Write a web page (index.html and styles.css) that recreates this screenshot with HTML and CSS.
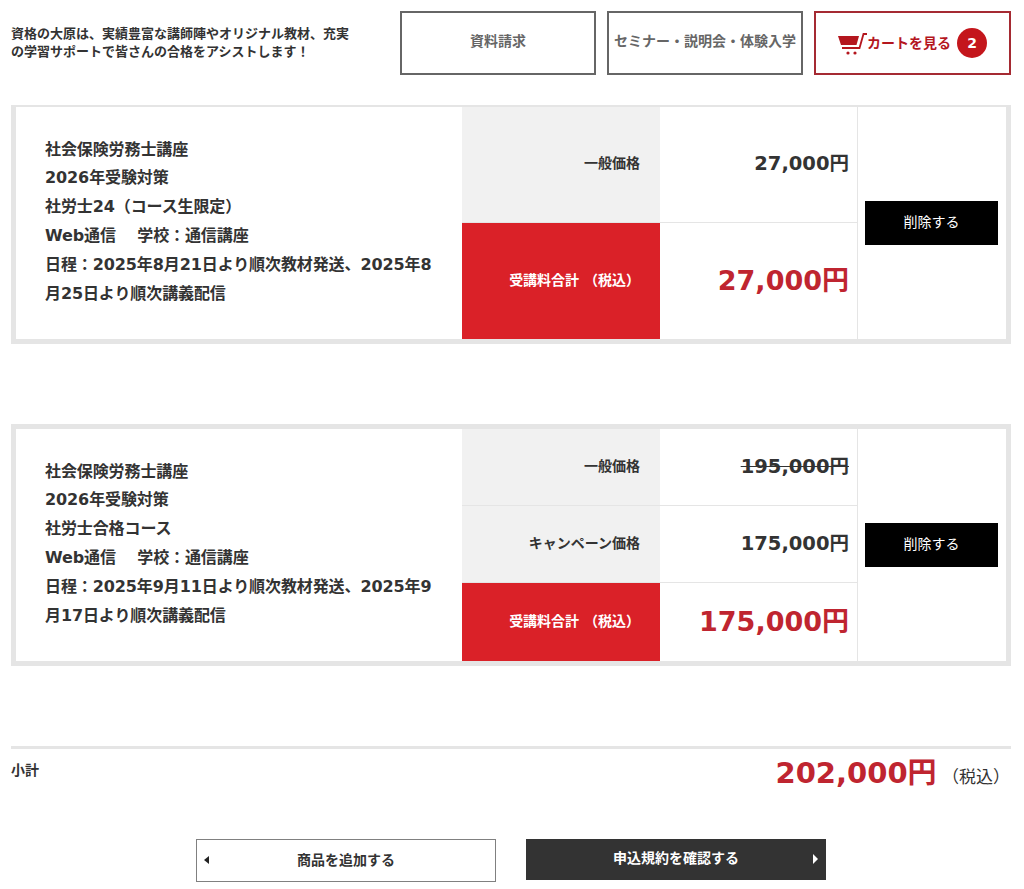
FILE: index.html
```html
<!DOCTYPE html>
<html lang="ja">
<head>
    <meta charset="UTF-8">
    <meta name="viewport" content="width=device-width, initial-scale=1.0">
    <title>カート</title>
    <link rel="stylesheet" href="styles.css">
</head>
<body>
    <header class="site-header">
        <p class="lead">資格の大原は、実績豊富な講師陣やオリジナル教材、充実<br>の学習サポートで皆さんの合格をアシストします！</p>
        <a class="head-button" href="#">資料請求</a>
        <a class="head-button" href="#">セミナー・説明会・体験入学</a>
        <a class="head-button cart-button" href="#">
            <svg class="cart-icon" width="30" height="24" viewBox="0 0 30 24">
                <path d="M1 5H22L19.5 14H4Z" fill="#b4161e"/>
                <path d="M5 17H22.5L26.5 3H30" fill="none" stroke="#b4161e" stroke-width="1.8"/>
                <circle cx="11" cy="22" r="1.6" fill="#b4161e"/>
                <circle cx="18" cy="22" r="1.6" fill="#b4161e"/>
            </svg>
            <span class="cart-label">カートを見る</span>
            <span class="cart-count">2</span>
        </a>
    </header>

    <table class="course course-first">
        <tr>
            <td class="course-info" rowspan="2">
                社会保険労務士講座<br>
                2026年受験対策<br>
                社労士24（コース生限定）<br>
                Web通信　 学校：通信講座<br>
                日程：2025年8月21日より順次教材発送、2025年8月25日より順次講義配信
            </td>
            <th class="price-label">一般価格</th>
            <td class="price">27,000円</td>
            <td class="action" rowspan="2"><a class="delete-button" href="#">削除する</a></td>
        </tr>
        <tr>
            <th class="price-label total-label">受講料合計 （税込）</th>
            <td class="price total-price">27,000円</td>
        </tr>
    </table>

    <table class="course course-second">
        <tr>
            <td class="course-info" rowspan="3">
                社会保険労務士講座<br>
                2026年受験対策<br>
                社労士合格コース<br>
                Web通信　 学校：通信講座<br>
                日程：2025年9月11日より順次教材発送、2025年9月17日より順次講義配信
            </td>
            <th class="price-label">一般価格</th>
            <td class="price"><s>195,000円</s></td>
            <td class="action" rowspan="3"><a class="delete-button" href="#">削除する</a></td>
        </tr>
        <tr>
            <th class="price-label">キャンペーン価格</th>
            <td class="price">175,000円</td>
        </tr>
        <tr>
            <th class="price-label total-label">受講料合計 （税込）</th>
            <td class="price total-price">175,000円</td>
        </tr>
    </table>

    <div class="subtotal">
        <span class="subtotal-label">小計</span>
        <span class="subtotal-value"><b>202,000円</b> （税込）</span>
    </div>

    <div class="nav-buttons">
        <a class="nav-button nav-back" href="#">商品を追加する</a>
        <a class="nav-button nav-next" href="#">申込規約を確認する</a>
    </div>
</body>
</html>
```

FILE: styles.css
```css
body {
    font-family: "DejaVu Sans", "Noto Sans CJK JP", sans-serif;
    color: #333;
    background-color: #fff;
    margin: 0;
    padding: 0 13px 0 11px;
}
a {
    text-decoration: none;
}
.site-header {
    display: flex;
    align-items: center;
    gap: 11px;
    padding-top: 11px;
}
.lead {
    flex: 1;
    margin: 0;
    font-size: 13px;
    font-weight: bold;
    line-height: 18px;
}
.head-button {
    display: flex;
    align-items: center;
    justify-content: center;
    box-sizing: border-box;
    width: 196px;
    height: 64px;
    padding-bottom: 6px;
    border: 2px solid #666;
    color: #666;
    font-size: 14px;
    font-weight: bold;
    white-space: nowrap;
}
.cart-button {
    width: 197px;
    padding: 0 1px 0 0;
    border-color: #a52a32;
    color: #b4161e;
}
.cart-icon {
    flex: none;
}
.cart-label {
    padding-bottom: 3px;
}
.cart-count {
    width: 30px;
    height: 30px;
    margin-left: 6px;
    border-radius: 50%;
    background-color: #c4161c;
    color: #fff;
    line-height: 30px;
    text-align: center;
}
.course {
    box-sizing: border-box;
    width: 1000px;
    border: 5px solid #e5e5e5;
    border-collapse: separate;
    border-spacing: 0;
    table-layout: fixed;
}
.course-first {
    height: 239px;
    margin: 30px 0 80px;
    border-top-width: 2px;
}
.course-first .price-label {
    height: 116px;
}
.course-second {
    height: 242px;
    margin-bottom: 80px;
}
.course-second .price-label {
    height: 77px;
}
.course-second .total-label {
    height: 78px;
}
.course-info {
    width: 446px;
    padding: 0 22px 2px 29px;
    box-sizing: border-box;
    font-size: 16px;
    font-weight: bold;
    line-height: 28.8px;
    letter-spacing: -0.1px;
}
.price-label {
    width: 198px;
    padding: 0 20px 5px 0;
    box-sizing: border-box;
    background-color: #f1f1f1;
    border-bottom: 1px solid #e5e5e5;
    font-size: 14px;
    text-align: right;
}
.price {
    width: 197px;
    padding: 0 8px 6px 0;
    box-sizing: border-box;
    border-bottom: 1px solid #e5e5e5;
    font-size: 19.5px;
    font-weight: bold;
    text-align: right;
}
.total-label {
    background-color: #da2128;
    border-bottom: none;
    color: #fff;
}
.total-price {
    border-bottom: none;
    color: #bf2530;
    font-size: 27px;
}
.action {
    padding: 0 8px 0 7px;
    border-left: 1px solid #e5e5e5;
}
.delete-button {
    display: block;
    height: 44px;
    background-color: #000;
    color: #fff;
    font-size: 14px;
    line-height: 42px;
    text-align: center;
}
.subtotal {
    display: flex;
    justify-content: space-between;
    height: 90px;
    border-top: 3px solid #e5e5e5;
}
.subtotal-label {
    margin-top: 10px;
    font-size: 14px;
    font-weight: bold;
}
.subtotal-value {
    padding-right: 1px;
    font-size: 17px;
}
.subtotal-value b {
    color: #bf2530;
    font-size: 29px;
}
.nav-buttons {
    display: flex;
    justify-content: center;
    align-items: flex-start;
    gap: 30px;
}
.nav-button {
    position: relative;
    box-sizing: border-box;
    width: 300px;
    font-size: 14px;
    font-weight: bold;
    text-align: center;
}
.nav-back {
    height: 43px;
    border: 1px solid #808080;
    color: #333;
    line-height: 41px;
}
.nav-next {
    height: 41px;
    background-color: #333;
    color: #fff;
    line-height: 39px;
}
.nav-button::before {
    content: "";
    position: absolute;
    top: 15px;
    border-style: solid;
    border-width: 5px 0 5px 5px;
    border-color: transparent transparent transparent #fff;
}
.nav-next::before {
    right: 8px;
}
.nav-back::before {
    left: 7px;
    top: 16px;
    border-width: 4px 5px 4px 0;
    border-color: transparent #222 transparent transparent;
}
```
